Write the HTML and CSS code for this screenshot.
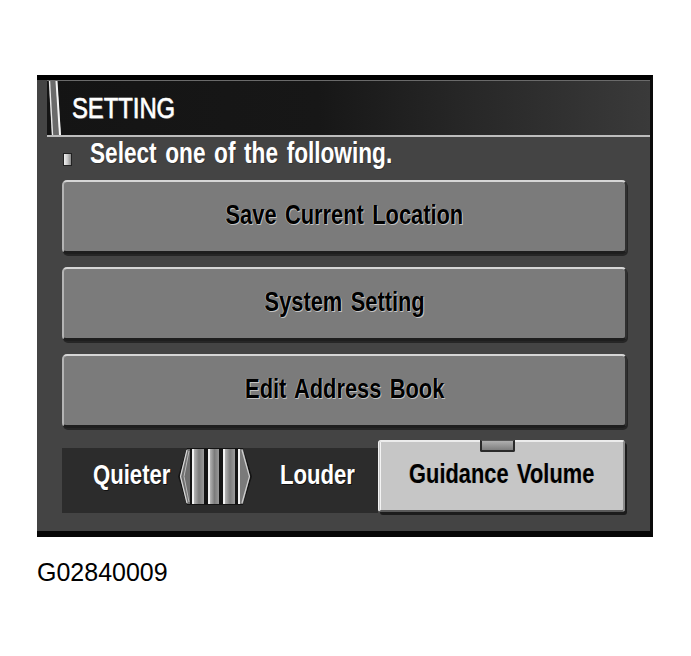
FILE: index.html
```html
<!DOCTYPE html>
<html>
<head>
<meta charset="utf-8">
<link rel="stylesheet" href="styles.css">
</head>
<body>
<div class="screen">
  <div class="header">
    <svg class="slant" width="14" height="54" viewBox="0 0 14 54">
      <polygon points="1,0 9,0 13,54 4,54" fill="#6a6a6a"/>
      <line x1="1.5" y1="0" x2="4.5" y2="54" stroke="#e8e8e8" stroke-width="1.4"/>
      <line x1="8.5" y1="0" x2="12" y2="54" stroke="#f4f4f4" stroke-width="2"/>
    </svg>
    <div class="title"><span>SETTING</span></div>
  </div>
  <div class="prompt">
    <i class="bullet"></i>
    <span class="prompt-text">Select one of the following.</span>
  </div>
  <div class="menu">
    <div class="btn"><span>Save Current Location</span></div>
    <div class="btn"><span>System Setting</span></div>
    <div class="btn"><span>Edit Address Book</span></div>
  </div>
  <div class="bottom">
    <div class="volume">
      <div class="lbl quieter"><span>Quieter</span></div>
      <svg class="slider" width="74" height="57" viewBox="0 0 74 57">
        <defs>
          <linearGradient id="bar" x1="0" x2="1" y1="0" y2="0">
            <stop offset="0" stop-color="#b4b4b4"/>
            <stop offset="0.5" stop-color="#7c7c7c"/>
            <stop offset="1" stop-color="#9a9a9a"/>
          </linearGradient>
        </defs>
        <polygon points="9,0 65,0 74,28.5 65,57 9,57 0,28.5" fill="#141414"/>
        <polygon points="2,28.5 9,1 12,1 12,56 9,56" fill="#6e6e6e"/>
        <polyline points="9,2 2.5,28.5 9,55" fill="none" stroke="#d8d8d8" stroke-width="1.2"/>
        <polyline points="11,3 6,28.5 11,54" fill="none" stroke="#bbbbbb" stroke-width="1"/>
        <rect x="14" y="1" width="2" height="55" fill="#f2f2f2"/>
        <rect x="16" y="1" width="10" height="55" fill="url(#bar)"/>
        <rect x="30" y="1" width="2" height="55" fill="#f2f2f2"/>
        <rect x="32" y="1" width="9" height="55" fill="url(#bar)"/>
        <rect x="45" y="1" width="2" height="55" fill="#f2f2f2"/>
        <rect x="47" y="1" width="10" height="55" fill="url(#bar)"/>
        <rect x="60" y="1" width="2" height="55" fill="#f2f2f2"/>
        <polygon points="62,1 65,1 72,28.5 65,56 62,56" fill="#7a7a7a"/>
        <polyline points="64,2 71.5,28.5 64,55" fill="none" stroke="#d0d0d0" stroke-width="1.2"/>
      </svg>
      <div class="lbl louder"><span>Louder</span></div>
    </div>
    <div class="guide">
      <i class="tab"></i>
      <span>Guidance Volume</span>
    </div>
  </div>
  <div class="filler"></div>
</div>
<p class="caption">G02840009</p>
</body>
</html>
```
FILE: styles.css
```css
body {
  margin: 0;
  background: #ffffff;
  font-family: "Liberation Sans", Arial, sans-serif;
}

.screen {
  margin: 75px 0 0 37px;
  width: 616px;
  height: 462px;
  box-sizing: border-box;
  background: #444444;
  border-top: 5px solid #000;
  border-right: 3px solid #0a0a0a;
  border-bottom: 6px solid #060606;
  display: flex;
  flex-direction: column;
}

.header {
  margin-left: 10px;
  height: 54px;
  border-top: 1px solid #6a6a6a;
  border-bottom: 2px solid #bdbdbd;
  background: linear-gradient(to right, #141414 0%, #171717 45%, #262626 68%, #3a3a3a 100%);
  display: flex;
  align-items: center;
  flex-shrink: 0;
}

.slant {
  display: block;
  margin-left: 1px;
  flex-shrink: 0;
}

.title {
  margin-left: 10px;
  white-space: nowrap;
}

.title span {
  display: inline-block;
  font-size: 29px;
  color: #fff;
  transform: scaleX(0.82);
  transform-origin: left center;
  -webkit-text-stroke: 0.6px #fff;
  text-shadow: 1px 1px 0 #555;
}

.prompt {
  height: 43px;
  display: flex;
  align-items: flex-start;
  flex-shrink: 0;
}

.bullet {
  display: block;
  width: 7px;
  height: 11px;
  margin: 16px 0 0 26px;
  background: linear-gradient(to right, #f0f0f0 0%, #c8c8c8 50%, #8a8a8a 100%);
  border: 1px solid #222;
}

.prompt-text {
  display: inline-block;
  margin-left: 18px;
  font-size: 29px;
  line-height: 33px;
  font-weight: bold;
  color: #fff;
  white-space: nowrap;
  word-spacing: 3px;
  transform: scaleX(0.78);
  transform-origin: left center;
  text-shadow: 1px 1px 0 #333;
}

.menu {
  margin-left: 25px;
  width: 565px;
  display: flex;
  flex-direction: column;
  gap: 13px;
  flex-shrink: 0;
}

.btn {
  height: 74px;
  box-sizing: border-box;
  background: #7b7b7b;
  border-radius: 5px;
  border-top: 2px solid #d6d6d6;
  border-left: 2px solid #b4b4b4;
  border-right: 2px solid #303030;
  border-bottom: 3px solid #1e1e1e;
  box-shadow: 1px 2px 0 #262626;
  display: flex;
  align-items: center;
  justify-content: center;
  padding-bottom: 4px;
}

.btn span,
.guide span {
  display: inline-block;
  font-size: 28px;
  font-weight: bold;
  color: #000;
  white-space: nowrap;
  word-spacing: 3px;
  transform: scaleX(0.78);
  text-shadow: 1px 1px 0 #c4c4c4, -1px 0 0 #a8a8a8;
}

.bottom {
  margin: 12px 0 0 25px;
  width: 563px;
  height: 73px;
  display: flex;
  flex-shrink: 0;
}

.volume {
  width: 316px;
  margin-top: 8px;
  height: 65px;
  background: #2c2c2c;
  display: flex;
  align-items: flex-start;
  padding-left: 31px;
  box-sizing: border-box;
}

.lbl {
  margin-top: 11px;
  white-space: nowrap;
}

.lbl span {
  display: inline-block;
  font-size: 28px;
  font-weight: bold;
  color: #fff;
  transform: scaleX(0.79);
  transform-origin: left center;
  text-shadow: 1px 1px 0 #111;
}

.quieter {
  width: 77px;
}

.slider {
  display: block;
  margin-left: 8px;
  flex-shrink: 0;
}

.louder {
  margin-left: 28px;
}

.guide {
  position: relative;
  width: 247px;
  height: 72px;
  box-sizing: border-box;
  background: #c6c6c6;
  border-radius: 3px;
  border-top: 2px solid #ececec;
  border-left: 3px double #f4f4f4;
  border-right: 2px solid #8a8a8a;
  border-bottom: 2px solid #5a5a5a;
  box-shadow: 2px 3px 0 #1c1c1c;
  display: flex;
  align-items: center;
  justify-content: center;
  padding-bottom: 4px;
}

.tab {
  position: absolute;
  top: -2px;
  left: 99px;
  width: 31px;
  height: 9px;
  background: linear-gradient(#b0b0b0, #7e7e7e);
  border: 2px solid #2a2a2a;
  border-top: 1px solid #555;
  border-radius: 0 0 2px 2px;
}

.filler {
  flex: 1;
}

.caption {
  margin: 21px 0 0 37px;
  font-size: 25px;
  color: #000;
}
```
